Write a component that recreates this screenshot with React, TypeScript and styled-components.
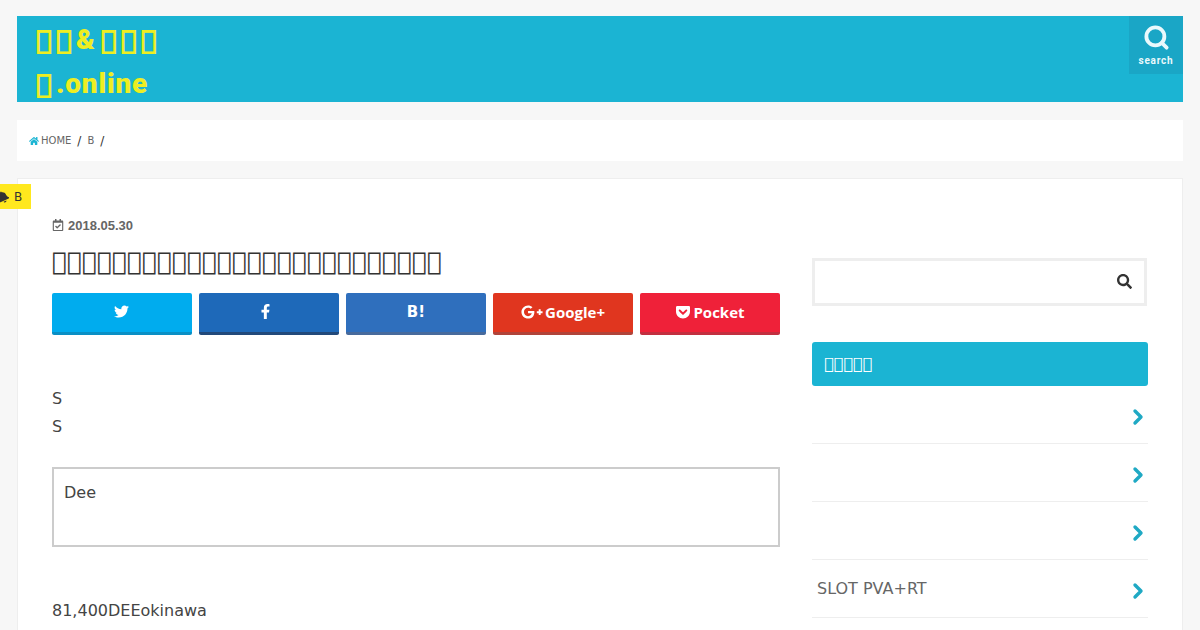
import styled, { createGlobalStyle } from "styled-components";
import { ChevronRight, Search } from "lucide-react";
import {
  FaBell,
  FaFacebookF,
  FaGetPocket,
  FaGooglePlusG,
  FaHome,
  FaRegCalendarCheck,
  FaSearch,
  FaTwitter,
} from "react-icons/fa";

// glyph missing from every installed font: shows up as an empty box, like the reference
const box = (count: number) => "\uE000".repeat(count);

const GlobalStyle = createGlobalStyle`
  html, body {
    margin: 0;
    height: 630px;
    overflow: hidden;
    background: #f7f7f7;
    font-family: "DejaVu Sans", sans-serif;
    color: #444;
  }
`;

const App = () => {
  return (
    <>
      <GlobalStyle />
      <Page>
        <Header>
          <Logo>
            <LogoLine>
              <LogoBoxes>{box(2)}</LogoBoxes>&amp;<LogoGapBoxes>{box(3)}</LogoGapBoxes>
            </LogoLine>
            <LogoLine>
              <LogoBoxes>{box(1)}</LogoBoxes>.online
            </LogoLine>
          </Logo>
          <SearchToggle>
            <Search size={27} strokeWidth={3.4} />
            <SearchLabel>search</SearchLabel>
          </SearchToggle>
        </Header>

        <Breadcrumb>
          <FaHome size={10} color="#1bb4d3" />
          <Crumb>HOME</Crumb>
          <Slash>/</Slash>
          <Crumb>B</Crumb>
          <Slash>/</Slash>
        </Breadcrumb>

        <Card>
          <CategoryBadge>
            <BadgeIcon>
              <FaBell size={12} />
            </BadgeIcon>
            <span>B</span>
          </CategoryBadge>

          <Main>
            <DateRow>
              <FaRegCalendarCheck size={12} />
              <span>2018.05.30</span>
            </DateRow>
            <Title>{box(26)}</Title>
            <ShareRow>
              <ShareButton $bg="#00acee" $shadow="#0a8fc4">
                <ShareIcon $shiftLeft={2}>
                  <FaTwitter size={15} />
                </ShareIcon>
              </ShareButton>
              <ShareButton $bg="#1e69b9" $shadow="#22497a">
                <ShareIcon $shiftLeft={7}>
                  <FaFacebookF size={15} />
                </ShareIcon>
              </ShareButton>
              <ShareButton $bg="#2f6fbd" $shadow="#476a9c">
                <HatenaMark>B!</HatenaMark>
              </ShareButton>
              <ShareButton $bg="#e0361f" $shadow="#b0443a">
                <ShareIcon $shiftLeft={0}>
                  <FaGooglePlusG size={22} />
                </ShareIcon>
                <ShareLabel>Google+</ShareLabel>
              </ShareButton>
              <ShareButton $bg="#ef2139" $shadow="#c22f40">
                <ShareIcon $shiftLeft={0}>
                  <FaGetPocket size={16} />
                </ShareIcon>
                <ShareLabel>Pocket</ShareLabel>
              </ShareButton>
            </ShareRow>

            <Paragraph>
              S
              <br />S
            </Paragraph>
            <NoteBox>Dee</NoteBox>
            <LastParagraph>81,400DEEokinawa</LastParagraph>
          </Main>

          <Sidebar>
            <SearchBox>
              <FaSearch size={15} color="#333" />
            </SearchBox>
            <WidgetTitle>{box(5)}</WidgetTitle>
            <WidgetList>
              {["", "", "", "SLOT PVA+RT"].map((label, idx) => (
                <WidgetRow key={idx}>
                  <span>{label}</span>
                  <RowArrow>
                    <ChevronRight size={24} strokeWidth={3.4} color="#1fa9c4" />
                  </RowArrow>
                </WidgetRow>
              ))}
            </WidgetList>
          </Sidebar>
        </Card>
      </Page>
    </>
  );
};

const Page = styled.div`
  display: flex;
  flex-direction: column;
  padding: 16px 17px 0;
`;

const Header = styled.header`
  display: flex;
  justify-content: space-between;
  align-items: flex-start;
  height: 86px;
  background: #1bb4d3;
`;

const Logo = styled.div`
  padding: 2px 0 0 19px;
  color: #eeee22;
  font-family: Roboto, sans-serif;
  font-size: 28px;
  font-weight: 900;
  letter-spacing: 0.8px;
  line-height: 44px;
`;

const LogoLine = styled.div`
  white-space: nowrap;
`;

const LogoBoxes = styled.span`
  font-family: "DejaVu Sans", sans-serif;
  font-size: 26px;
  letter-spacing: 4.4px;
  -webkit-text-stroke: 1.2px #eeee22;
`;

const LogoGapBoxes = styled(LogoBoxes)`
  margin-left: 5px;
`;

const SearchToggle = styled.div`
  display: flex;
  flex-direction: column;
  align-items: center;
  width: 54px;
  height: 58px;
  padding-top: 8px;
  box-sizing: border-box;
  background: #1aa6c6;
  color: #eaf9fc;
`;

const SearchLabel = styled.span`
  margin-top: 4px;
  font-family: Roboto, sans-serif;
  font-size: 10px;
  font-weight: bold;
  letter-spacing: 0.8px;
`;

const Breadcrumb = styled.nav`
  display: flex;
  align-items: center;
  height: 41px;
  margin-top: 18px;
  padding-left: 12px;
  background: #fff;
  font-size: 10px;
`;

const Crumb = styled.span`
  margin-left: 2px;
  color: #666;
`;

const Slash = styled.span`
  margin: 0 4px 0 6px;
  font-size: 12px;
  color: #333;
`;

const Card = styled.main`
  position: relative;
  display: grid;
  grid-template-columns: 728px 336px;
  column-gap: 32px;
  margin-top: 17px;
  padding: 0 34px;
  height: 452px;
  background: #fff;
  border: 1px solid #eee;
  border-bottom: 0;
  box-sizing: border-box;
`;

const CategoryBadge = styled.div`
  position: absolute;
  top: 5px;
  left: -21px;
  display: flex;
  align-items: center;
  gap: 5px;
  width: 34px;
  height: 25px;
  box-sizing: border-box;
  background: #ffe81e;
  color: #333;
  font-size: 12px;
`;

const BadgeIcon = styled.span`
  display: flex;
  transform: rotate(-25deg);
`;

const Main = styled.article`
  display: flex;
  flex-direction: column;
  align-items: flex-start;
`;

const DateRow = styled.div`
  display: flex;
  align-items: center;
  gap: 4px;
  height: 14px;
  margin-top: 39px;
  color: #666;
  font-family: "Liberation Sans", sans-serif;
  font-size: 13px;
  font-weight: bold;
`;

const Title = styled.h1`
  margin: 13px 0 0;
  font-size: 25px;
  font-weight: normal;
  line-height: 34px;
  color: #333;
  white-space: nowrap;
`;

const ShareRow = styled.div`
  display: grid;
  grid-template-columns: repeat(5, 140px);
  column-gap: 7px;
  margin-top: 14px;
`;

const ShareButton = styled.div<{ $bg: string; $shadow: string }>`
  display: flex;
  justify-content: center;
  align-items: center;
  gap: 2px;
  height: 39px;
  background: ${(props) => props.$bg};
  border-bottom: 3px solid ${(props) => props.$shadow};
  border-radius: 2px;
  color: #fff;
`;

const ShareIcon = styled.span<{ $shiftLeft: number }>`
  display: flex;
  padding-right: ${(props) => props.$shiftLeft}px;
  padding-bottom: 2px;
`;

const ShareLabel = styled.span`
  padding-bottom: 1px;
  font-family: "Open Sans", sans-serif;
  font-size: 15px;
  font-weight: bold;
`;

const HatenaMark = styled.span`
  padding-bottom: 2px;
  font-size: 15px;
  font-weight: bold;
`;

const Paragraph = styled.p`
  margin: 50px 0 0;
  font-size: 16px;
  line-height: 28px;
`;

const NoteBox = styled.div`
  width: 100%;
  height: 80px;
  margin-top: 26px;
  padding: 12px 10px;
  box-sizing: border-box;
  border: 2px solid #ccc;
  font-size: 16px;
  line-height: 24px;
`;

const LastParagraph = styled.p`
  margin: 50px 0 0;
  font-size: 16px;
  line-height: 28px;
`;

const Sidebar = styled.aside`
  display: flex;
  flex-direction: column;
  padding-top: 79px;
`;

const SearchBox = styled.div`
  display: flex;
  justify-content: flex-end;
  align-items: center;
  width: 335px;
  height: 48px;
  padding: 0 12px 2px 0;
  box-sizing: border-box;
  border: 3px solid #eee;
`;

const WidgetTitle = styled.h2`
  margin: 36px 0 0;
  padding: 0 12px;
  height: 44px;
  background: #1bb4d3;
  border-radius: 3px;
  color: #fff;
  font-size: 16px;
  font-weight: normal;
  line-height: 44px;
`;

const WidgetList = styled.ul`
  margin: 0;
  padding: 0;
  list-style: none;
`;

const WidgetRow = styled.li`
  display: flex;
  justify-content: space-between;
  align-items: center;
  height: 58px;
  padding-left: 5px;
  box-sizing: border-box;
  border-bottom: 1px solid #eee;
  font-size: 16px;
  color: #666;
`;

const RowArrow = styled.span`
  display: flex;
  margin-right: -2px;
  padding-top: 4px;
`;

export default App;
